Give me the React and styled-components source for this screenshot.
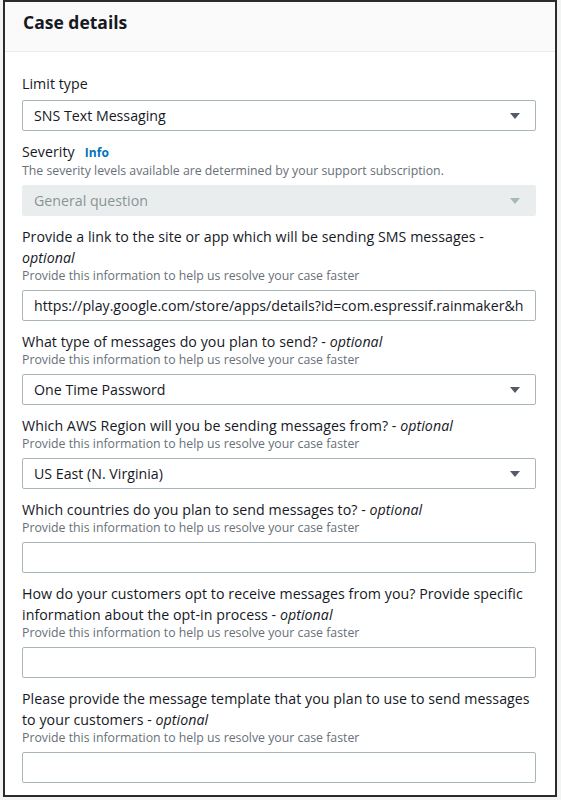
import styled, { createGlobalStyle } from "styled-components";

const GlobalStyle = createGlobalStyle`
  html, body {
    margin: 0;
    padding: 0;
    background: #f2f3f3;
  }
  body {
    font-family: "Open Sans", "Liberation Sans", sans-serif;
    color: #16191f;
  }
`;

const Frame = styled.div`
  box-sizing: border-box;
  width: 554px;
  height: 797px;
  margin-left: 3px;
  border: 2px solid #2b2b2b;
  background: #ffffff;
  display: flex;
  flex-direction: column;
  overflow: hidden;
`;

const Header = styled.div`
  height: 50px;
  background: #fafafa;
  border-bottom: 1px solid #eaeded;
  padding: 7px 18px 0;
  box-sizing: border-box;
`;

const Title = styled.h2`
  margin: 0;
  font-size: 17.5px;
  line-height: 26px;
  font-weight: 700;
  color: #16191f;
`;

const Body = styled.div`
  display: flex;
  flex-direction: column;
  gap: 10px;
  padding: 21px 19px 0 17px;
`;

const Field = styled.div`
  display: flex;
  flex-direction: column;
`;

const Label = styled.div`
  font-size: 14.2px;
  letter-spacing: 0.05px;
  line-height: 21px;
  color: #16191f;

  em {
    font-style: italic;
  }
`;

const InfoLink = styled.a`
  margin-left: 10px;
  font-size: 12px;
  font-weight: 700;
  color: #0073bb;
  text-decoration: none;
`;

const Hint = styled.div`
  font-size: 12.3px;
  line-height: 16px;
  color: #687078;
`;

const Select = styled.div`
  box-sizing: border-box;
  margin-top: 6px;
  height: 31px;
  display: flex;
  align-items: center;
  justify-content: space-between;
  padding: 0 15px 0 11px;
  border: 1px solid ${(p) => (p.disabled ? "#eaeded" : "#aab7b8")};
  border-radius: 2px;
  background: ${(p) => (p.disabled ? "#eaeded" : "#ffffff")};
  font-size: 14.2px;
  color: ${(p) => (p.disabled ? "#879596" : "#16191f")};
`;

const Caret = styled.span`
  width: 0;
  height: 0;
  border-left: 5px solid transparent;
  border-right: 5px solid transparent;
  border-top: 6px solid ${(p) => (p.disabled ? "#aab7b8" : "#545b64")};
`;

const TextInput = styled.input`
  box-sizing: border-box;
  margin-top: 6px;
  width: 100%;
  height: 31px;
  padding: 0 12px 0 11px;
  border: 1px solid #aab7b8;
  border-radius: 2px;
  background: #ffffff;
  font-family: inherit;
  font-size: 14.2px;
  color: #16191f;
  outline: none;
`;

const HINT = "Provide this information to help us resolve your case faster";

const Dropdown = ({ value, disabled }) => (
  <Select disabled={disabled}>
    <span>{value}</span>
    <Caret disabled={disabled} />
  </Select>
);

export default function App() {
  return (
    <>
      <GlobalStyle />
      <Frame>
        <Header>
          <Title>Case details</Title>
        </Header>
        <Body>
          <Field>
            <Label>Limit type</Label>
            <Dropdown value="SNS Text Messaging" />
          </Field>
          <Field>
            <Label>
              Severity<InfoLink href="#">Info</InfoLink>
            </Label>
            <Hint>
              The severity levels available are determined by your support
              subscription.
            </Hint>
            <Dropdown value="General question" disabled />
          </Field>
          <Field>
            <Label>
              Provide a link to the site or app which will be sending SMS
              messages - <em>optional</em>
            </Label>
            <Hint>{HINT}</Hint>
            <TextInput
              readOnly
              defaultValue="https://play.google.com/store/apps/details?id=com.espressif.rainmaker&hl=en"
            />
          </Field>
          <Field>
            <Label>
              What type of messages do you plan to send? - <em>optional</em>
            </Label>
            <Hint>{HINT}</Hint>
            <Dropdown value="One Time Password" />
          </Field>
          <Field>
            <Label>
              Which AWS Region will you be sending messages from? -{" "}
              <em>optional</em>
            </Label>
            <Hint>{HINT}</Hint>
            <Dropdown value="US East (N. Virginia)" />
          </Field>
          <Field>
            <Label>
              Which countries do you plan to send messages to? -{" "}
              <em>optional</em>
            </Label>
            <Hint>{HINT}</Hint>
            <TextInput />
          </Field>
          <Field>
            <Label>
              How do your customers opt to receive messages from you? Provide
              specific information about the opt-in process - <em>optional</em>
            </Label>
            <Hint>{HINT}</Hint>
            <TextInput />
          </Field>
          <Field>
            <Label>
              Please provide the message template that you plan to use to send
              messages to your customers - <em>optional</em>
            </Label>
            <Hint>{HINT}</Hint>
            <TextInput />
          </Field>
        </Body>
      </Frame>
    </>
  );
}
